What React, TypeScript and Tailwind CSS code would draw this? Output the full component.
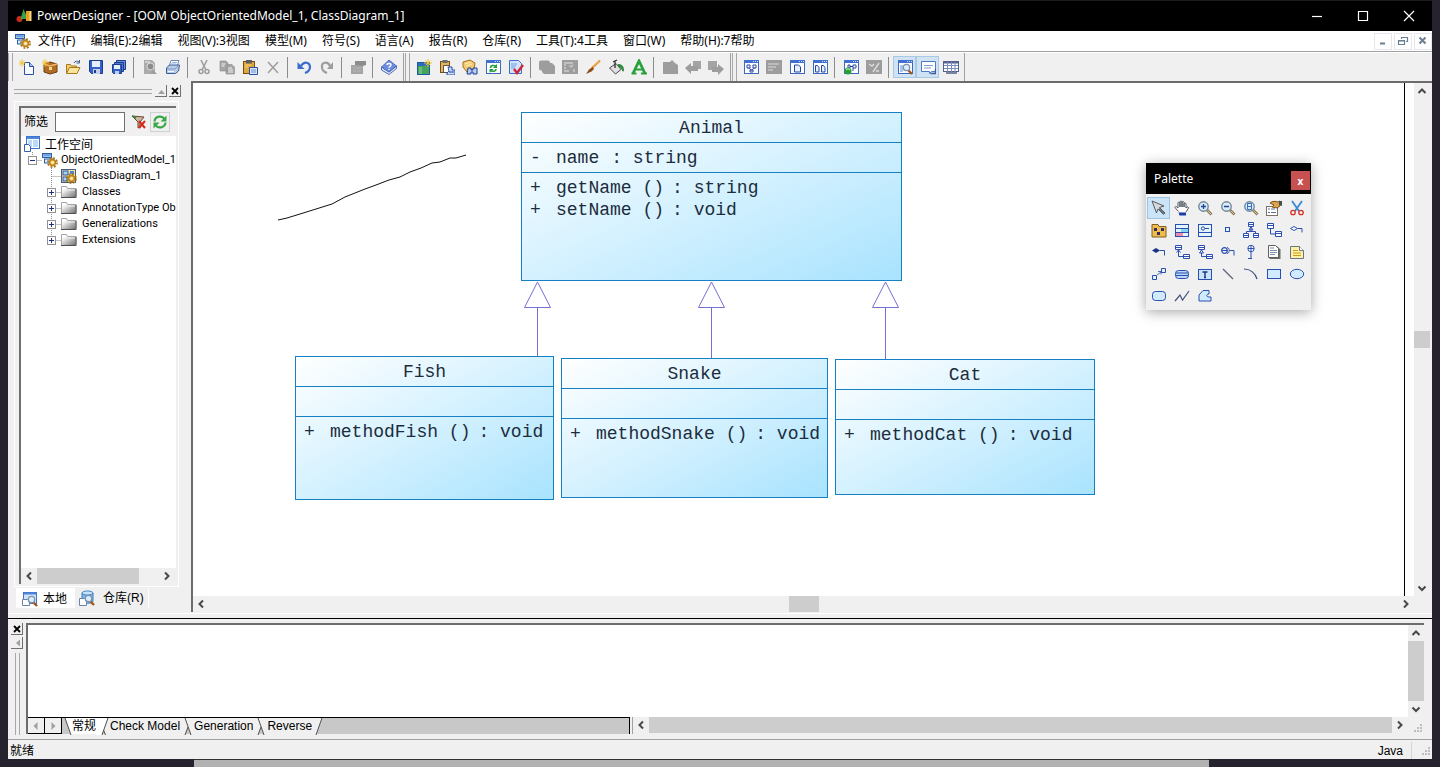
import type { ReactNode } from 'react'
import { clsx } from 'clsx'

const BLUE = '#2a4fb0'
const GRAY = '#9d9d9d'

function Icon({ children }: { children: ReactNode }) {
  return (
    <svg viewBox="0 0 16 16" className="h-4 w-4 shrink-0" fill="none" aria-hidden="true">
      {children}
    </svg>
  )
}

// Small window with a blue caption, base of many toolbar icons
function Frame({ children }: { children?: ReactNode }) {
  return (
    <>
      <rect x="1.5" y="1.5" width="14" height="13" fill="#fff" stroke="#3c68c0" />
      <rect x="1" y="1" width="15" height="3" fill="#3f70d0" />
      <path d="M10 2.5h1M12 2.5h1M14 2.5h1" stroke="#cfe0ff" />
      {children}
    </>
  )
}

const star = <path d="M3 0v8M-1 4h8M0.5 1.5l5 5M5.5 1.5l-5 5" stroke="#f0c030" strokeWidth="0.9" />
const gear = (
  <>
    <circle cx="10.5" cy="10.5" r="4.6" stroke="#a87414" strokeWidth="1.6" strokeDasharray="2 1.6" />
    <circle cx="10.5" cy="10.5" r="3" fill="#f2bc48" stroke="#b8801c" strokeWidth="1.4" />
    <circle cx="10.5" cy="10.5" r="1.3" fill="#fff6d8" />
  </>
)
const lens = (
  <>
    <path d="M11 11l4 4" stroke="#a0561c" strokeWidth="2.4" />
    <circle cx="9.5" cy="8.5" r="3.2" fill="#d8eefc" stroke="#7f93ac" strokeWidth="1.3" />
  </>
)
const glass = (
  <>
    <path d="M10 10l4.5 4.5" stroke="#8a7a58" strokeWidth="2.6" />
    <path d="M10.5 10.5l3.5 3.5" stroke="#d8c48c" />
    <circle cx="6.5" cy="6.5" r="4.7" fill="#d9ecf7" stroke="#6f8797" strokeWidth="1.4" />
  </>
)

const icons: Record<string, ReactNode> = {
  app: (
    <>
      <circle cx="3.5" cy="11" r="3" fill="#c82c1c" />
      <path d="M7.5 1L12 11H4.5z" fill="#38a048" />
      <rect x="10" y="3" width="5" height="10" fill="#e89c20" />
      <path d="M13.5 3h2v10h-2z" fill="#f8d888" />
    </>
  ),
  model: (
    <>
      <rect x="0.5" y="1.5" width="9" height="4" fill="#9cc4f0" stroke="#2c60a8" />
      <rect x="2.5" y="7" width="8" height="4" fill="#d8e8fa" stroke="#2c60a8" />
      <path d="M1.5 3h7" stroke="#4484d0" />
      {gear}
    </>
  ),
  new: (
    <>
      <path d="M5.5 3.5h5l4 4v8h-9z" fill="#f6faff" stroke="#2c4f9c" />
      <path d="M10.5 3.5v4h4" fill="#a8c4f0" stroke="#2c4f9c" />
      {star}
    </>
  ),
  box: (
    <>
      <path d="M2 5l6-2 7 2v8l-7 2-6-2z" fill="#b06c24" stroke="#6c3c10" />
      <path d="M2 5l6 2 7-2" stroke="#f0b868" strokeWidth="1.4" />
      <path d="M7 8h3v3H7z" fill="#f8d890" />
      {star}
    </>
  ),
  open: (
    <>
      <path d="M1.5 14V5.5h4l1 1.5h5v2" fill="#f2cc6c" stroke="#a87a1c" />
      <path d="M1.5 14.5l3-6h10.500l-3 6z" fill="#fbe49c" stroke="#a87a1c" />
      <path d="M9 4c1-2 3-2.500 5-1M14.500 1v3h-3" stroke="#44608c" />
    </>
  ),
  save: (
    <>
      <path d="M1.500 1.500h13v13h-11l-2-2z" fill="#3460c8" stroke="#1c3c8c" />
      <rect x="4" y="2" width="8" height="6" fill="#e4eefc" />
      <rect x="5" y="10" width="7" height="5" fill="#c4d0e8" />
      <rect x="6" y="11" width="2" height="3" fill="#1c3c8c" />
    </>
  ),
  saveAll: (
    <>
      <path d="M5.500 1.500h9v9h-9z" fill="#6c90dc" stroke="#1c3c8c" />
      <path d="M3.500 3.500h9v9h-9z" fill="#5078d0" stroke="#1c3c8c" />
      <path d="M1.500 5.500h9v9h-8l-1-1z" fill="#3460c8" stroke="#1c3c8c" />
      <rect x="3" y="6" width="6" height="4" fill="#e4eefc" />
      <rect x="4" y="12" width="4" height="3" fill="#c4d0e8" />
    </>
  ),
  preview: (
    <>
      <path d="M2 1h8l3 3v11H2z" fill="#ababab" />
      <circle cx="8.500" cy="7.500" r="3.500" fill="#8c8c8c" stroke="#f0f0f0" strokeWidth="0.800" />
      <path d="M10 10l5 5H9z" fill={GRAY} />
      <path d="M3 3h5" stroke="#eee" />
    </>
  ),
  print: (
    <>
      <path d="M6 1.500h8l-2 6H4z" fill="#f8fbff" stroke="#6c88b8" />
      <path d="M1.500 9l3-3h10l-1 6-3 2.500h-9z" fill="#b8cbe8" stroke="#3c5c94" />
      <path d="M2 10h8l3-3" stroke="#7c98c8" />
      <path d="M7 3.500h5M6 5h5" stroke="#9cb4dc" />
      <path d="M3 12.500h6" stroke="#f4f8ff" />
    </>
  ),
  cut: (
    <>
      <path d="M5 1l5 10M11 1L6 11" stroke={GRAY} strokeWidth="1.600" />
      <circle cx="5" cy="12.500" r="2" stroke={GRAY} strokeWidth="1.500" />
      <circle cx="11" cy="12.500" r="2" stroke={GRAY} strokeWidth="1.500" />
    </>
  ),
  copy: (
    <>
      <path d="M1 2h6l2 2v8H1zM7 5.500h6l2.500 2.500v7H7z" fill="#a6a6a6" stroke="#8c8c8c" strokeWidth="0.600" />
      <path d="M2.500 5h4M2.500 7h3M9 9h4M9 11h5M9 13h5" stroke="#eee" />
    </>
  ),
  paste: (
    <>
      <rect x="1.500" y="2.500" width="11" height="12" fill="#e0a83c" stroke="#7c4c0c" />
      <rect x="4" y="1" width="6" height="3.500" fill="#5c5c64" />
      <path d="M7.500 8.500h8v7h-8z" fill="#d8e6fc" stroke="#2c4fa0" />
      <path d="M9 11h5M9 13h5" stroke="#6c8cd0" />
      <path d="M3 6h6M3 8h3" stroke="#f8d070" />
    </>
  ),
  close: <path d="M3 3l10 11M13 3L3 14" stroke={GRAY} strokeWidth="1.500" />,
  undo: (
    <>
      <path d="M5 7c3-5 9-4 9 1 0 3-2 5-5 6" stroke="#3c6cd0" strokeWidth="2.200" />
      <path d="M1.500 3v7h7z" fill="#3c6cd0" />
    </>
  ),
  redo: (
    <>
      <path d="M11 7C9 2 2 3 3 8c0 3 2 5 5 6" stroke={GRAY} strokeWidth="2.200" />
      <path d="M14 3v7H8z" fill={GRAY} />
    </>
  ),
  props: (
    <>
      <path d="M1 6h12v9H1z" fill="#a4a4a4" />
      <path d="M5 2h11v4l-3 1-8-1z" fill="#8c8c8c" />
      <path d="M3 9h3M3 12h3M7 9h4M7 12h4" stroke="#b8b8b8" />
    </>
  ),
  help: (
    <>
      <path d="M0.500 8v3L8 15.500l7.500-6V7L8 13z" fill="#dce6fa" stroke="#304ca4" strokeWidth="0.800" />
      <path d="M0.500 8L8 1l7.500 6L8 13z" fill="#6c8ce0" stroke="#4460b4" strokeWidth="0.800" />
      <path d="M6 6c0-2 4-2 4 0 0 1.500-2 1.300-2 2.800M8 10v1" stroke="#fff" strokeWidth="1.400" />
    </>
  ),
  newBoard: (
    <>
      <rect x="1.500" y="3.500" width="12" height="12" fill="#44a45c" stroke="#1c5ca0" />
      <rect x="2" y="4" width="11" height="3" fill="#2c6cc0" />
      <path d="M3 8h3v7H3z" fill="#6cbc7c" />
      <path d="M12 0v8M8 4h8M9.500 1.500l5 5M14.500 1.500l-5 5" stroke="#f0c030" />
    </>
  ),
  pasteLink: (
    <>
      <rect x="1.500" y="2.500" width="9" height="11" fill="#e4b458" stroke="#7c4c0c" />
      <rect x="3.500" y="1" width="5" height="3" fill="#6c6c74" />
      <path d="M4.500 6.500h6v7h-6z" fill="#fff" stroke="#555" />
      <path d="M9 8h4v3h3v5H8v-2l2-2z" fill="#c8dcfc" stroke="#1c3f9c" strokeWidth="0.900" />
      <path d="M10 13h5" stroke="#1c3f9c" />
    </>
  ),
  find: (
    <>
      <path d="M1 3l7-2 5 3-1 6-7 3-4-5z" fill="#f4c86c" stroke="#a8701c" />
      <path d="M3 5l6-2M4 7l6-2" stroke="#fff0c0" />
      <path d="M6 9h3v2h2V9h4v6h-4v-2H9v2H5z" fill="#b8ccf4" stroke="#1c3f9c" />
    </>
  ),
  refresh: (
    <Frame>
      <path d="M5.500 9c0-3 4-3 5.500-1.500M11 10c0 2.500-4 3-5.500 1" stroke="#209c38" strokeWidth="1.500" />
      <path d="M12 5v4H8zM4.500 14v-4h4z" fill="#209c38" />
    </Frame>
  ),
  check: (
    <>
      <path d="M1.500 1.500h9l3 3v10h-12z" fill="#d0e4fa" stroke="#3c70c4" />
      <path d="M3 5h6M3 7h5M3 9h4" stroke="#6c9cdc" />
      <path d="M6 10l3 4 6-8" stroke="#d02438" strokeWidth="2.400" />
    </>
  ),
  grayShapes: (
    <>
      <rect x="0" y="1.500" width="11" height="10" rx="2" fill={GRAY} />
      <path d="M3 4h10l3 3v8H5l-2-2z" fill={GRAY} />
    </>
  ),
  grayBox: (
    <>
      <rect x="0" y="1" width="16" height="14" fill={GRAY} />
      <path d="M2 4h9M2 6h2M2 9h2M2 12h5M12 10v3" stroke="#e4e4e4" />
      <path d="M6 7l6-2-2 4z" fill="#c0c0c0" />
    </>
  ),
  brush: (
    <>
      <path d="M15 1.500L7 9" stroke="#e09434" strokeWidth="2.200" />
      <path d="M7.500 8L4 10.500 1 15l5.500-2.500L9 10z" fill="#8c4c1c" />
      <path d="M14 2L8 7.500" stroke="#f8c868" strokeWidth="0.800" />
    </>
  ),
  bucket: (
    <>
      <path d="M1.500 9L8 4.500l5 6-5.500 4.500z" fill="#e0e0e0" stroke="#484848" />
      <path d="M7 9V1.500M5 3l4-2" stroke="#303030" strokeWidth="1.300" />
      <path d="M10 5c4 0 6 2 6 7-1 1-2 0-2-1-1-2-2-3-4-3z" fill="#2c8c3c" />
    </>
  ),
  font: (
    <>
      <path d="M2 14.500L8 2l6 12.500" stroke="#28a03c" strokeWidth="2.800" />
      <path d="M4 10.500h8M0.500 14.500h5M10 14.500h6" stroke="#28a03c" strokeWidth="1.800" />
    </>
  ),
  grayDown: <path d="M1 3h7l2-2 3 3 3 2v9H1z" fill={GRAY} />,
  grayLeft: (
    <>
      <path d="M0 9l6-5v3h7v5H6v3z" fill={GRAY} />
      <path d="M8 2h8v8h-3V7H8z" fill="#a4a4a4" />
    </>
  ),
  grayRight: (
    <>
      <path d="M16 10l-6-5v3H4v5h6v3z" fill={GRAY} />
      <path d="M0 2h9v6H4v3H0z" fill="#a4a4a4" />
    </>
  ),
  diagram: (
    <Frame>
      <path d="M4 6h3v3H4zM10 6h3v3h-3zM7 11h3v2H7zM5.500 9l3 2 3-2" stroke="#2446a8" />
    </Frame>
  ),
  grayList: (
    <>
      <rect x="0" y="1" width="16" height="14" fill={GRAY} />
      <path d="M2 5h11M2 8h8M2 11h5" stroke="#dcdcdc" />
    </>
  ),
  pageWin: (
    <Frame>
      <path d="M5.500 6h4l2 2v5h-6z" fill="#e8f0fc" stroke="#2446a8" />
    </Frame>
  ),
  pagesWin: (
    <Frame>
      <path d="M3.500 6.500h2l1.500 2v4.500h-3.500zM9.500 6.500h2l1.500 2v4.500H9.500z" fill="#e8f0fc" stroke="#2446a8" />
    </Frame>
  ),
  genWin: (
    <>
      <Frame>
        <path d="M5 6h2v3H5zM10 6h3v3h-3zM7 7.500h3M10 9v3" stroke="#2446a8" />
      </Frame>
      <circle cx="5" cy="12" r="3.500" fill="#2c9c34" />
      <path d="M3 11c1-1.500 3-1.500 4 0" stroke="#a4e49c" strokeWidth="1.200" />
    </>
  ),
  graySlash: (
    <>
      <rect x="0" y="1" width="16" height="14" fill={GRAY} />
      <path d="M3 5l3 2 2-2M13 4L7 13M10 12h3" stroke="#dcdcdc" strokeWidth="1.400" />
    </>
  ),
  browser: (
    <Frame>
      <path d="M3 6h3v7H3z" fill="#a8c8f4" />
      {lens}
    </Frame>
  ),
  output: (
    <>
      <path d="M1.500 2.500h14v10h-4l-2 2v-2h-8z" fill="#fff" stroke="#4c78c4" />
      <path d="M4 6.500h9M4 9h7" stroke="#7c9cd4" />
      <path d="M15.500 10v4.500h-5" stroke="#3c5c9c" strokeWidth="1.500" />
    </>
  ),
  grid: (
    <>
      <rect x="0.500" y="2.500" width="15" height="10" fill="#fff" stroke="#53628c" />
      <path d="M0 3.500h16" stroke="#53628c" strokeWidth="2" />
      <path d="M1 6.500h14M1 9.500h14M4.500 3v10M8.500 3v10M12 3v10" stroke="#7c8cbc" />
      <path d="M3 14h11" stroke="#53628c" strokeWidth="1.500" />
    </>
  ),
  workspace: (
    <>
      <rect x="2.500" y="0.500" width="13" height="12" fill="#fff" stroke="#3c74cc" />
      <path d="M3 1h12v2H3z" fill="#4c88e0" />
      <path d="M4 4h4v7H4zM9 4h5v7H9z" fill="#bcd8fa" />
      <path d="M0.500 8.500h4l2 2v5h-6z" fill="#fff" stroke="#3460a8" />
    </>
  ),
  classDiagram: (
    <>
      <rect x="0.500" y="1.500" width="14" height="13" fill="#f8e0a0" stroke="#4c5c7c" />
      <rect x="2" y="3" width="5" height="4" fill="#a8d0f8" stroke="#2c5ca4" />
      <rect x="2" y="9" width="4" height="4" fill="#a8d0f8" stroke="#2c5ca4" />
      <path d="M9 3h4v3H9z" fill="#4c84d0" />
      {gear}
    </>
  ),
  folder: (
    <>
      <defs>
        <linearGradient id="metal" x1="0" y1="0" x2="1" y2="1">
          <stop offset="0.2" stopColor="#ffffff" />
          <stop offset="1" stopColor="#6c6c6c" />
        </linearGradient>
      </defs>
      <path d="M0.500 13.500v-11h5l1 2h8.500v9z" fill="url(#metal)" stroke="#a4a4a4" />
      <path d="M0 13.500h15V5" stroke="#505050" />
      <path d="M1 6h13" stroke="#ececec" />
    </>
  ),
  filterOff: (
    <>
      <path d="M1 2l6 6v6l2-1V8l4-5z" fill="#c8b8a0" stroke="#6c4434" />
      <path d="M1 2l4 2" stroke="#2c8c3c" strokeWidth="1.500" />
      <path d="M8 7l6 7M14 7l-6 7" stroke="#d82818" strokeWidth="2" />
    </>
  ),
  reload: (
    <>
      <path d="M2.500 7.500C3 2 10 1 12.500 5M13.500 8.500C13 14 6 15 3.500 11" stroke="#38a848" strokeWidth="2.200" />
      <path d="M14.500 1.500v6h-6zM1.500 14.500v-6h6z" fill="#38a848" />
    </>
  ),
  local: (
    <>
      <rect x="1.500" y="1.500" width="13" height="11" fill="#cfe2fa" stroke="#4474c4" />
      <path d="M2 2.500h12" stroke="#4c84dc" strokeWidth="2" />
      <path d="M0.500 8.500h5l2 2v4h-7z" fill="#fff" stroke="#6c84a8" />
      {lens}
    </>
  ),
  repo: (
    <>
      <path d="M3 3v8c0 3 11 3 11 0V3z" fill="#78b8ec" stroke="#3c80c0" />
      <ellipse cx="8.500" cy="3" rx="5.500" ry="2" fill="#c8e4fa" stroke="#3c80c0" />
      <path d="M0.500 8.500h5l2 2v5h-7z" fill="#fff" stroke="#6c84a8" />
      {lens}
    </>
  ),
  pointer: (
    <>
      <path d="M1 1l12 5-4.500 1.500L14 13l-1.500 1.500L7 9l-1.500 4z" fill="#d8d8d8" stroke="#585c64" />
      <path d="M8 8.500l5 5" stroke="#686c74" strokeWidth="1.600" />
    </>
  ),
  hand: (
    <>
      <path
        d="M4.500 11.500L1 7.500c0-1.500 2-1 3 .5V3c0-1.200 2-1.200 2 0v4V2c0-1.300 2-1.300 2 0v5-4.500c0-1.300 2-1.300 2 0V7 4c0-1.300 2-1.300 2 0v4c.5-1.500 2.500-1.500 2.500 0L12 12"
        fill="#fff"
        stroke="#404854"
        strokeWidth="0.900"
      />
      <path d="M4.500 12.500h7.500v3H5.500z" fill="#1c3cac" />
    </>
  ),
  zoomIn: (
    <>
      {glass}
      <path d="M4 6.500h5M6.500 4v5" stroke="#24429c" strokeWidth="1.300" />
    </>
  ),
  zoomOut: (
    <>
      {glass}
      <path d="M4 6.500h5" stroke="#24429c" strokeWidth="1.500" />
    </>
  ),
  zoomPage: (
    <>
      {glass}
      <path d="M4.500 3.500h4v6h-4zM5 6.500h3" stroke="#3870c8" />
    </>
  ),
  handProps: (
    <>
      <rect x="0.500" y="6.500" width="11" height="9" fill="#fff" stroke="#7c7464" />
      <path d="M2 9h2M2 12.500h2M5 9h4M5 12.500h5" stroke="#5c6c9c" />
      <path d="M4 3c2-2 6-2 8-1l2-1v5l-3 2-5-1 2-2z" fill="#dca44c" stroke="#7c5418" />
      <path d="M13 1h3v5l-3-1z" fill="#44504c" />
    </>
  ),
  scissors: (
    <>
      <path d="M3 1l7 10M13 1L6 11" stroke="#3c8cd4" strokeWidth="1.900" />
      <circle cx="4" cy="12.500" r="2.200" stroke="#d83020" strokeWidth="1.300" />
      <circle cx="12" cy="12.500" r="2.200" stroke="#d83020" strokeWidth="1.300" />
    </>
  ),
  package: (
    <>
      <path d="M1 2.500h6l1 2h7v10.500H1z" fill="#f0bc4c" stroke="#806020" />
      <path d="M3 6h3v3H3zM10 6h3v3h-3zM6 10h3v3H6z" fill="#342c5c" />
    </>
  ),
  class: (
    <>
      <rect x="1.500" y="2.500" width="13" height="12" fill="#e4f4ff" stroke={BLUE} />
      <path d="M7 7h7v3H7z" fill="#88d4f4" />
      <path d="M2 11h7v3H2z" fill="#f08ca8" />
      <path d="M2 6.500h12M2 10.500h12" stroke={BLUE} />
    </>
  ),
  interface: (
    <>
      <rect x="1.500" y="2.500" width="13" height="12" fill="#e4f4ff" stroke={BLUE} />
      <path d="M2 10.500h12M8 6.500h4" stroke={BLUE} />
      <circle cx="6" cy="6.500" r="1.700" stroke={BLUE} />
    </>
  ),
  port: <rect x="5.500" y="5.500" width="4" height="4" fill="#e4f4ff" stroke={BLUE} />,
  hierarchy: (
    <>
      <path d="M5.500 0.500h5v4h-5zM0.500 11.500h5v4h-5zM10.500 11.500h5v4h-5z" fill="#fff" stroke={BLUE} />
      <path d="M8 4.500v5M8 5l-2 3h4zM3.500 11V9.500h9V11M6 2.500h4M1 13.500h4M11 13.500h4" stroke={BLUE} />
    </>
  ),
  association: (
    <>
      <path d="M1.500 1.500h6v5h-6zM9.500 9.500h6v5h-6z" fill="#fff" stroke={BLUE} />
      <path d="M4.500 6.500v5.500h5M2 3.500h5M10 11.500h5" stroke={BLUE} />
    </>
  ),
  aggregation: (
    <>
      <path d="M1.500 6.500l3.500-2 3.500 2-3.500 2z" fill="#fff" stroke={BLUE} />
      <path d="M8.500 6.500h4.500v4" stroke={BLUE} />
    </>
  ),
  composition: (
    <>
      <path d="M1 6.500l4-2.500 4 2.500-4 2.500z" fill="#1c3484" />
      <path d="M8.500 6.500h5v5" stroke={BLUE} />
    </>
  ),
  dependency: (
    <>
      <path d="M1.500 1.500h6v4h-6zM9.500 10.500h6v4h-6z" fill="#fff" stroke={BLUE} />
      <path d="M4.500 6v6.500h5M2.500 8.500l2-2.500 2 2.500M2 3.500h5M10 12.500h5" stroke={BLUE} />
    </>
  ),
  realization: (
    <>
      <path d="M1.500 1.500h6v4h-6zM9.500 10.500h6v4h-6z" fill="#fff" stroke={BLUE} />
      <path d="M4.500 9v3.500h5M2.500 9l2-3 2 3zM2 3.500h5M10 12.500h5" stroke={BLUE} />
    </>
  ),
  requireLink: (
    <>
      <circle cx="4.500" cy="6.500" r="2.800" stroke={BLUE} strokeWidth="1.200" />
      <path d="M7 3.500c3 .5 3 5.500 0 6M2 6.500h5M9.500 6.500h4.500v5" stroke={BLUE} />
    </>
  ),
  innerLink: (
    <>
      <circle cx="8" cy="4.500" r="3.200" fill="#fff" stroke={BLUE} />
      <path d="M5 4.500h6M8 1.500V15M5 14.500h4" stroke={BLUE} />
    </>
  ),
  file: (
    <>
      <path d="M3.500 2.500h8l3 3v9.500h-11z" fill="#6c6c6c" />
      <path d="M2.500 1.500h7l3 3v9h-10z" fill="#fcfcf8" stroke="#606060" />
      <path d="M4 4h4M4 6.500h7M4 8.500h7M4 10.500h5" stroke="#7c8cb4" />
    </>
  ),
  note: (
    <>
      <path d="M1.500 2.500h9l4 4v8h-13z" fill="#fff0a8" stroke="#6c7484" />
      <path d="M10.500 2.500v4h4" fill="#fff" stroke="#6c7484" />
      <path d="M4 6.500h5M4 9h8M4 11.500h8" stroke="#d09a14" />
    </>
  ),
  link: (
    <>
      <path d="M1.500 9.500h4v4h-4zM10.500 2.500h4v4h-4z" fill="#e4f4ff" stroke={BLUE} />
      <path d="M6 9l4-3M7 5.500h3v3" stroke={BLUE} strokeWidth="0.800" />
    </>
  ),
  titleBox: (
    <>
      <rect x="1.500" y="4.500" width="13" height="8" rx="3" fill="#b8d8f8" stroke={BLUE} />
      <path d="M2 7h12M2 9.500h12" stroke={BLUE} />
    </>
  ),
  textBox: (
    <>
      <rect x="1.500" y="3.500" width="13" height="10" fill="#c8e4fc" stroke={BLUE} />
      <path d="M5.500 6h5M8 6v5.500M7 11.500h2" stroke="#1c3484" strokeWidth="1.400" />
    </>
  ),
  line: <path d="M3 3l10 10" stroke="#5c607c" strokeWidth="1.200" />,
  arc: <path d="M1 3c6 0 11 4 13 10" stroke="#34487c" strokeWidth="1.200" />,
  rect: <rect x="1.500" y="3.500" width="13" height="9" fill="#d0ebff" stroke={BLUE} />,
  ellipse: <ellipse cx="8" cy="8" rx="6.700" ry="4.700" fill="#d0ebff" stroke={BLUE} />,
  roundRect: <rect x="1.500" y="3.500" width="13" height="9" rx="3" fill="#d0ebff" stroke={BLUE} />,
  polyline: <path d="M1 13l5-6 2.500 5L15 3" stroke="#44507c" strokeWidth="1.200" />,
  polygon: <path d="M2 13V7l4-4.500h6V6c-3 0-3 3 0 3h2v4z" fill="#d0ebff" stroke={BLUE} strokeLinejoin="round" />,
}

const menus = [
  '文件(F)', '编辑(E):2编辑', '视图(V):3视图', '模型(M)', '符号(S)', '语言(A)',
  '报告(R)', '仓库(R)', '工具(T):4工具', '窗口(W)', '帮助(H):7帮助',
]

// "|" marks a separator
const toolbars = [
  ['new', 'box', 'open', 'save', 'saveAll', '|', 'preview', 'print', '|', 'cut', 'copy', 'paste', 'close', '|', 'undo', 'redo', '|', 'props', '|', 'help'],
  ['newBoard', 'pasteLink', 'find', 'refresh', 'check', '|', 'grayShapes', 'grayBox', 'brush', 'bucket', 'font', '|', 'grayDown', 'grayLeft', 'grayRight'],
  ['diagram', 'grayList', 'pageWin', 'pagesWin', '|', 'genWin', 'graySlash', '|', 'browser', 'output', 'grid'],
]
const pressed = ['browser', 'output']

const palette = [
  'pointer', 'hand', 'zoomIn', 'zoomOut', 'zoomPage', 'handProps', 'scissors',
  'package', 'class', 'interface', 'port', 'hierarchy', 'association', 'aggregation',
  'composition', 'dependency', 'realization', 'requireLink', 'innerLink', 'file', 'note',
  'link', 'titleBox', 'textBox', 'line', 'arc', 'rect', 'ellipse',
  'roundRect', 'polyline', 'polygon',
]

function Chevron({ dir, className }: { dir: 'up' | 'down' | 'left' | 'right'; className?: string }) {
  const d = {
    up: 'M4.500 10L8 6.500l3.500 3.500',
    down: 'M4.500 6.500L8 10l3.500-3.500',
    left: 'M10 4.500L6.500 8l3.500 3.500',
    right: 'M6 4.500L9.500 8 6 11.500',
  }[dir]
  return (
    <button aria-label={dir} className={clsx('flex h-4 w-4 shrink-0 items-center justify-center', className)}>
      <svg viewBox="0 0 16 16" className="h-4 w-4" fill="none">
        <path d={d} stroke="#484848" strokeWidth="2" />
      </svg>
    </button>
  )
}

function Bevel({ label, children }: { label: string; children: ReactNode }) {
  return (
    <button
      aria-label={label}
      className="flex h-3 w-3 shrink-0 items-center justify-center border-r border-b border-[#707070] bg-[#f0f0f0]"
    >
      <svg viewBox="0 0 12 12" className="h-3 w-3 shrink-0" fill="none">
        {children}
      </svg>
    </button>
  )
}

function TitleBar() {
  return (
    <header className="flex h-[31px] shrink-0 items-center border-t border-[#1c1c1c] bg-black pl-2 text-white">
      <Icon>{icons.app}</Icon>
      <h1 className="ml-[5px] flex-1 truncate text-xs">
        PowerDesigner - [OOM ObjectOrientedModel_1, ClassDiagram_1]
      </h1>
      <div className="flex">
        {['M3 8.500h10', 'M3.500 3.500h9v9h-9z', 'M3 3l10 10M13 3L3 13'].map((d, i) => (
          <button key={d} aria-label={['Minimize', 'Maximize', 'Close'][i]} className="flex w-[46px] justify-center">
            <Icon>
              <path d={d} stroke="#fff" strokeWidth="1.200" />
            </Icon>
          </button>
        ))}
      </div>
    </header>
  )
}

function MenuBar() {
  return (
    <nav className="flex h-[21px] shrink-0 items-center border-b border-[#a0a0a0] bg-white pl-[7px]">
      <Icon>{icons.model}</Icon>
      <div className="flex flex-1 gap-[15px] pl-[7px] text-xs whitespace-nowrap">
        {menus.map((m) => (
          <button key={m}>{m}</button>
        ))}
      </div>
      <div className="flex gap-0.5">
        {['M5 10.500h5', 'M6.500 6V4.500h6v4H11M3.500 7.500h6v4h-6zM3 8h7', 'M4.500 4.500l6 6M10.500 4.500l-6 6'].map((d, i) => (
          <button
            key={d}
            aria-label={['Minimize diagram', 'Restore diagram', 'Close diagram'][i]}
            className="flex h-[17px] w-[18px] items-center justify-center border border-[#e4e8ee]"
          >
            <Icon>
              <path d={d} stroke="#6a7f94" strokeWidth={i === 1 ? 1.2 : 2} />
            </Icon>
          </button>
        ))}
      </div>
    </nav>
  )
}

function Toolbars() {
  return (
    <div className="flex h-[29px] shrink-0 border-t border-white">
      {toolbars.map((items, i) => (
        <div key={i} role="toolbar" className="flex items-center border-r border-[#a0a0a0] pr-[3px] last:pr-0.5">
          <div className={clsx('mr-0.5 h-full w-[5px] border-x border-[#a8a8a8]', i > 0 && 'ml-px')} />
          {items.map((name, n) =>
            name === '|' ? (
              <div key={n} className="flex w-2 justify-center">
                <div className="h-[21px] w-0.5 border-l border-[#8c8c8c]" />
              </div>
            ) : (
              <button
                key={n}
                aria-label={name}
                className={clsx(
                  'flex h-[22px] w-[23px] items-center justify-center border',
                  pressed.includes(name) ? 'border-[#a9c8e4] bg-[#cfe3f5]' : 'border-transparent',
                )}
              >
                <Icon>{icons[name]}</Icon>
              </button>
            ),
          )}
        </div>
      ))}
    </div>
  )
}

function Branch({ sign, last }: { sign?: '+' | '-'; last?: boolean }) {
  return (
    <svg viewBox="0 0 19 16" className="h-4 w-[19px] shrink-0" fill="none" aria-hidden="true">
      <path d={last ? 'M9.500 0v8' : 'M9.500 0v16'} stroke="#8c8c8c" strokeDasharray="1 1" />
      <path d="M9.500 8.500H19" stroke="#8c8c8c" strokeDasharray="1 1" />
      {sign && (
        <>
          <rect x="5.500" y="4.500" width="8" height="8" fill="#fff" stroke="#909090" />
          <path d={sign === '+' ? 'M7 8.500h5M9.500 6v5' : 'M7 8.500h5'} stroke="#203080" />
        </>
      )}
    </svg>
  )
}

const nodes = ['ClassDiagram_1', 'Classes', 'AnnotationType Ob', 'Generalizations', 'Extensions']

function Browser() {
  return (
    <aside className="flex w-[183px] shrink-0 flex-col pt-1">
      <div className="flex h-3 items-center gap-0.5 pr-[10px] pl-1.5">
        <div className="mr-px h-[5px] flex-1 border-y border-[#a8a8a8]" />
        <Bevel label="Collapse">
          <path d="M3 9l3.500-4L10 9z" fill="#a0a0a0" />
        </Bevel>
        <Bevel label="Close browser">
          <path d="M3 3l6 6M9 3L3 9" stroke="#000" strokeWidth="1.800" />
        </Bevel>
      </div>
      <div className="mx-[6px] mt-1 mr-3 flex min-h-0 flex-1 flex-col border border-white p-1 pr-0.5 pb-0.5">
        <div className="flex min-h-0 flex-1 flex-col border-t-2 border-l-2 border-[#707070]">
          <div className="flex h-7 shrink-0 items-center bg-[#f0f0f0] pl-[3px]">
            <label htmlFor="filter" className="text-xs">筛选</label>
            <input id="filter" className="ml-[7px] h-5 w-[70px] border border-[#707070] bg-white px-1 text-xs" />
            <button aria-label="Clear filter" className="ml-1.5">
              <Icon>{icons.filterOff}</Icon>
            </button>
            <button aria-label="Refresh" className="ml-[3px] border border-[#d0d0d0] p-px">
              <Icon>{icons.reload}</Icon>
            </button>
          </div>
          <ul className="min-h-0 flex-1 overflow-hidden bg-white font-['Roboto'] text-[11px] leading-4 whitespace-nowrap">
            <li className="flex h-4 items-center gap-[5px] pl-[3px] font-['Noto_Sans_CJK_SC'] text-xs">
              <Icon>{icons.workspace}</Icon>
              工作空间
            </li>
            <li className="flex h-4 items-center pl-0.5">
              <Branch sign="-" last />
              <Icon>{icons.model}</Icon>
              <span className="ml-[3px]">ObjectOrientedModel_1</span>
            </li>
            {nodes.map((name, i) => (
              <li key={name} className="flex h-4 items-center pl-[21px]">
                <Branch sign={i ? '+' : undefined} last={i === nodes.length - 1} />
                <Icon>{i ? icons.folder : icons.classDiagram}</Icon>
                <span className="ml-[5px]">{name}</span>
              </li>
            ))}
          </ul>
          <div className="flex h-4 shrink-0 bg-[#f0f0f0] pr-px">
            <Chevron dir="left" />
            <div className="w-[102px] bg-[#cdcdcd]" />
            <Chevron dir="right" className="ml-auto" />
          </div>
        </div>
      </div>
      <div className="mt-px mb-1 ml-2 flex h-5 shrink-0 text-xs">
        <button className="flex items-center gap-[5px] bg-white pt-0.5 pr-2 pl-1.5">
          <Icon>{icons.local}</Icon>
          本地
        </button>
        <button className="flex items-center gap-2 border-r border-white px-1 font-['Liberation_Sans','Noto_Sans_CJK_SC',sans-serif]">
          <Icon>{icons.repo}</Icon>
          仓库(R)
        </button>
      </div>
    </aside>
  )
}

interface ClassBoxProps {
  name: string
  className: string
  attribute?: string[]
  methods: string[][]
}

function ClassBox({ name, className, attribute, methods }: ClassBoxProps) {
  return (
    <section
      className={clsx(
        'absolute flex flex-col border border-[#1580c4] bg-linear-to-br from-white to-[#a8e3fe] leading-[22px] whitespace-pre',
        className,
      )}
    >
      <h2 className="h-[29px] pt-1 text-center">{name}</h2>
      <div className="flex h-[30px] gap-3 border-t border-[#1580c4] pt-1 pl-2">
        {attribute && (
          <>
            <span className="w-[14px]">-</span>
            <span>{attribute[0]}</span>
            <span>: {attribute[1]}</span>
          </>
        )}
      </div>
      <div className="flex-1 border-t border-[#1580c4] pt-1 pl-2">
        {methods.map(([method, type]) => (
          <div key={method} className="flex gap-2">
            <span className="w-[18px]">+</span>
            <span>{method} ()</span>
            <span>: {type}</span>
          </div>
        ))}
      </div>
    </section>
  )
}

function Palette() {
  return (
    <section className="absolute top-20 left-[953px] w-[165px] bg-[#f0f0f0] pb-[3px] shadow-[0_2px_12px_rgba(0,0,0,0.35)]">
      <div className="flex h-[31px] items-center justify-between bg-black pr-px pl-2 text-xs text-white">
        Palette
        <button
          aria-label="Close palette"
          className="mt-1 h-[19px] w-[19px] bg-[#c75050] text-[10px] leading-4 font-bold"
        >
          x
        </button>
      </div>
      <div className="grid grid-cols-7 pt-[3px] pr-[3px] pl-px">
        {palette.map((name) => (
          <button
            key={name}
            aria-label={name}
            className={clsx(
              'flex h-[22px] items-center justify-center border',
              name === 'pointer' ? 'border-[#9cc4e4] bg-[#cce4f7]' : 'border-transparent',
            )}
          >
            <Icon>{icons[name]}</Icon>
          </button>
        ))}
      </div>
    </section>
  )
}

function Canvas() {
  return (
    <main className="flex min-w-0 flex-1 flex-col border-t-2 border-l-2 border-[#6c6c6c]">
      <div className="flex min-h-0 flex-1 bg-white">
        <div className="relative min-w-0 flex-1 overflow-hidden border-r border-black font-['Liberation_Mono',monospace] text-lg text-[#1c2c3c]">
          <svg width="960" height="420" className="absolute top-0 left-0" fill="none">
            <path
              d="M85 137L94 135 107 131 123 126 139 121 152 114 172 106 183 102 196 97 207 94 217 89 228 85 239 80 247 79 257 75 263 75 273 72"
              stroke="#101010"
            />
            {[344.5, 518.5, 692.5].map((x, i) => (
              <path
                key={x}
                d={`M${x} 199l-13 25.500h26zM${x} 224.500v${[49, 51, 52][i]}`}
                stroke="#7470d4"
              />
            ))}
          </svg>
          <ClassBox
            name="Animal"
            className="top-[29px] left-[328px] h-[169px] w-[381px]"
            attribute={['name', 'string']}
            methods={[['getName', 'string'], ['setName', 'void']]}
          />
          <ClassBox name="Fish" className="top-[273px] left-[102px] h-36 w-[259px]" methods={[['methodFish', 'void']]} />
          <ClassBox name="Snake" className="top-[275px] left-[368px] h-[140px] w-[267px]" methods={[['methodSnake', 'void']]} />
          <ClassBox name="Cat" className="top-[276px] left-[642px] h-[136px] w-[260px]" methods={[['methodCat', 'void']]} />
          <div className="font-['Noto_Sans','Noto_Sans_CJK_SC',sans-serif] text-black">
            <Palette />
          </div>
        </div>
        <div className="ml-[9px] flex w-[18px] flex-col items-center justify-between bg-[#f0f0f0] pr-0.5">
          <Chevron dir="up" />
          <div className="h-[17px] w-4 bg-[#cdcdcd]" />
          <Chevron dir="down" />
        </div>
      </div>
      <div className="flex h-4 shrink-0 justify-between bg-[#f0f0f0] pr-[18px]">
        <Chevron dir="left" />
        <div className="w-[30px] bg-[#cdcdcd]" />
        <Chevron dir="right" />
      </div>
    </main>
  )
}

function TabEdge({ kind }: { kind: 'start' | 'active' | 'mid' | 'end' }) {
  const lines = {
    start: 'M1 0l6 17',
    active: 'M6 17l6-17M7.500 12l2 5',
    mid: 'M5 0l6 17M8 9l-3 8',
    end: 'M4 17l6-17',
  }[kind]
  const fills = {
    start: ['M1 0h7v17H7z', '#fff'],
    active: ['M0 0h12L6 17H0z', '#fff'],
    mid: ['M0 0h14v17h-3L8 9l-3 8H0z', '#f0f0f0'],
    end: ['M0 0h10L4 17H0z', '#f0f0f0'],
  }[kind]
  return (
    <svg
      viewBox={kind === 'start' ? '0 0 8 17' : '0 0 14 17'}
      className={clsx('h-[17px] shrink-0', kind === 'start' ? 'w-2' : 'w-[14px]')}
      fill="none"
      aria-hidden="true"
    >
      {kind === 'active' && <path d="M12 0h2v17H9.500L7.500 12z" fill="#f0f0f0" />}
      <path d={fills[0]} fill={fills[1]} />
      <path d={lines} stroke="#505050" />
    </svg>
  )
}

function SizeGrip() {
  return (
    <svg viewBox="0 0 12 12" className="h-3 w-3 shrink-0" aria-hidden="true">
      <path d="M8 2h2v2H8zM5 5h2v2H5zM8 5h2v2H8zM2 8h2v2H2zM5 8h2v2H5zM8 8h2v2H8z" fill="#bdbdbd" />
    </svg>
  )
}

function Output() {
  return (
    <section className="flex h-[121px] shrink-0 border-t border-black pt-1">
      <div className="flex w-[18px] shrink-0 flex-col items-center gap-0.5 pb-1">
        <Bevel label="Close output">
          <path d="M3 3l6 6M9 3L3 9" stroke="#000" strokeWidth="1.800" />
        </Bevel>
        <Bevel label="Collapse output">
          <path d="M9 2.500L5 6l4 3.500z" fill="#a0a0a0" />
        </Bevel>
        <div className="mt-0.5 w-[5px] flex-1 border-x border-[#a8a8a8]" />
      </div>
      <div className="mr-2 mb-[5px] flex min-w-0 flex-1 flex-col border-t-2 border-l-2 border-[#6c6c6c]">
        <div className="flex min-h-0 flex-1 bg-white">
          <textarea aria-label="Output" className="min-w-0 flex-1 resize-none outline-none" />
          <div className="flex w-4 flex-col bg-[#f0f0f0]">
            <Chevron dir="up" />
            <div className="flex-1 bg-[#cdcdcd]" />
            <Chevron dir="down" />
          </div>
        </div>
        <div className="flex h-[17px] shrink-0">
          <div className="flex w-[602px] border-t border-r border-black bg-[#c8c8c8] font-['Liberation_Sans','Noto_Sans_CJK_SC',sans-serif] text-xs">
            {['M7.500 2L3.500 6l4 4z', 'M4.500 2l4 4-4 4z'].map((d, i) => (
              <button
                key={d}
                aria-label={i ? 'Next tab' : 'Previous tab'}
                className="flex w-[17px] items-center justify-center border-r border-b border-black bg-[#f0f0f0]"
              >
                <svg viewBox="0 0 12 12" className="h-3 w-3">
                  <path d={d} fill="#a0a0a0" />
                </svg>
              </button>
            ))}
            <div role="tablist" className="ml-0.5 flex leading-4">
              <TabEdge kind="start" />
              <button role="tab" className="bg-white">常规</button>
              <TabEdge kind="active" />
              <button role="tab" className="bg-[#f0f0f0]">Check Model</button>
              <TabEdge kind="mid" />
              <button role="tab" className="bg-[#f0f0f0]">Generation</button>
              <TabEdge kind="mid" />
              <button role="tab" className="bg-[#f0f0f0]">Reverse</button>
              <TabEdge kind="end" />
            </div>
          </div>
          <div className="ml-0.5 flex min-w-0 flex-1 border-l border-[#a0a0a0] pb-px">
            <Chevron dir="left" />
            <div className="flex-1 bg-[#cdcdcd]" />
            <Chevron dir="right" />
          </div>
          <div className="flex w-4 items-end justify-end">
            <SizeGrip />
          </div>
        </div>
      </div>
    </section>
  )
}

export default function App() {
  return (
    <div className="flex h-screen flex-col bg-[#26232f] px-2 font-['Noto_Sans','Noto_Sans_CJK_SC',sans-serif] text-black">
      <div className="flex min-h-0 flex-1 flex-col bg-[#f0f0f0]">
        <TitleBar />
        <MenuBar />
        <Toolbars />
        <div className="mb-1 flex min-h-0 flex-1 border-b border-white pb-px">
          <Browser />
          <Canvas />
        </div>
        <Output />
        <footer className="flex h-5 shrink-0 items-center border-t border-[#a0a0a0] pt-0.5 pl-0.5 text-xs">
          <span className="flex-1">就绪</span>
          <span className="font-['Liberation_Sans',sans-serif]">Java</span>
          <span className="ml-2 h-full border-l border-[#d4d4d4] pr-2" />
          <SizeGrip />
        </footer>
      </div>
      <div className="mr-[223px] ml-[186px] h-2 shrink-0 border-t border-[#303030] bg-[#b2b2b2]" />
    </div>
  )
}
